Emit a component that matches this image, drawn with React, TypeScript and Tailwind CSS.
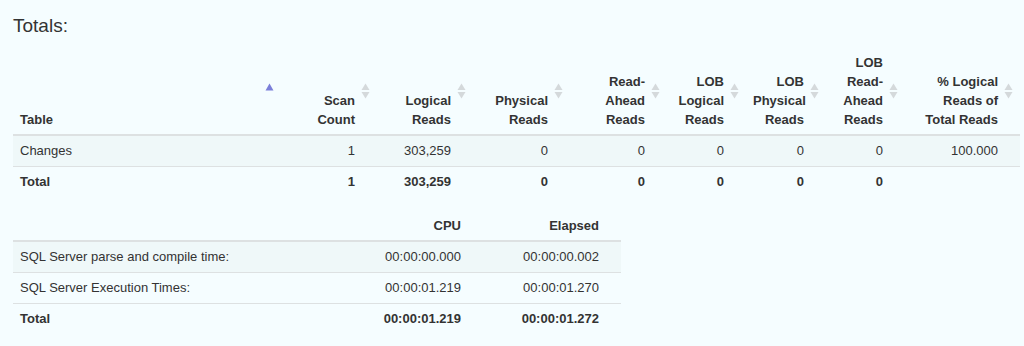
import React from 'react';

type Col = { key: string; label: string[]; width: number; sort?: 'asc' | 'none' };

const ioCols: Col[] = [
  { key: 'table', label: ['Table'], width: 268, sort: 'asc' },
  { key: 'scan', label: ['Scan', 'Count'], width: 96 },
  { key: 'logical', label: ['Logical', 'Reads'], width: 96 },
  { key: 'physical', label: ['Physical', 'Reads'], width: 97 },
  { key: 'readahead', label: ['Read-', 'Ahead', 'Reads'], width: 97 },
  { key: 'lobLogical', label: ['LOB', 'Logical', 'Reads'], width: 79 },
  { key: 'lobPhysical', label: ['LOB', 'Physical', 'Reads'], width: 80 },
  { key: 'lobReadahead', label: ['LOB', 'Read-', 'Ahead', 'Reads'], width: 79 },
  { key: 'percent', label: ['% Logical', 'Reads of', 'Total Reads'], width: 115 },
];

const ioRows = [
  ['Changes', '1', '303,259', '0', '0', '0', '0', '0', '100.000'],
];
const ioTotal = ['Total', '1', '303,259', '0', '0', '0', '0', '0', ''];

const timeRows = [
  ['SQL Server parse and compile time:', '00:00:00.000', '00:00:00.002'],
  ['SQL Server Execution Times:', '00:00:01.219', '00:00:01.270'],
];
const timeTotal = ['Total', '00:00:01.219', '00:00:01.272'];

function SortIcon({ sorted }: { sorted: boolean }) {
  return (
    <svg
      width="9"
      height="17"
      viewBox="0 0 9 17"
      className="absolute right-[7px] top-1/2 -translate-y-1/2"
    >
      {sorted ? (
        <path d="M4.5 1 L8.5 8 L0.5 8 Z" fill="#7b7fd9" />
      ) : (
        <>
          <path d="M4.5 1 L8.5 7.5 L0.5 7.5 Z" fill="#d4d9db" />
          <path d="M4.5 16 L8.5 9.5 L0.5 9.5 Z" fill="#d4d9db" />
        </>
      )}
    </svg>
  );
}

const cell = 'border-t border-[#dde1e2] py-[5px] pl-[7px] pr-[22px] leading-[20px] whitespace-nowrap ';

export default function App() {
  return (
    <div
      className="min-h-[346px] w-[1024px] bg-[#f5fdff] text-[#333] px-[13px]"
      style={{ fontFamily: '"Liberation Sans", Arial, sans-serif' }}
    >
      <h3 className="pt-[15px] text-[19px] leading-[22px] font-normal">Totals:</h3>

      <table className="mt-[11px] table-fixed border-collapse text-[13px] leading-[19px] w-[998px]">
        <colgroup>
          {ioCols.map((c) => (
            <col key={c.key} style={{ width: c.width }} />
          ))}
        </colgroup>
        <thead>
          <tr>
            {ioCols.map((c, i) => (
              <th
                key={c.key}
                className={
                  'relative align-bottom font-bold border-b-2 border-[#dde1e2] py-[5px] pl-[7px] pr-[22px] ' +
                  (i === 0 ? 'text-left' : 'text-right')
                }
              >
                {c.label.map((l) => (
                  <div key={l} className="whitespace-nowrap">{l}</div>
                ))}
                <SortIcon sorted={c.sort === 'asc'} />
              </th>
            ))}
          </tr>
        </thead>
        <tbody>
          {ioRows.map((r) => (
            <tr key={r[0]} className="bg-[#eff8f9]">
              {r.map((v, i) => (
                <td key={i} className={cell + (i === 0 ? 'text-left' : 'text-right')}>
                  {v}
                </td>
              ))}
            </tr>
          ))}
          <tr>
            {ioTotal.map((v, i) => (
              <td key={i} className={cell + 'font-bold ' + (i === 0 ? 'text-left' : 'text-right')}>
                {v}
              </td>
            ))}
          </tr>
        </tbody>
      </table>

      <table className="mt-[14px] table-fixed border-collapse text-[13px] leading-[19px] w-[608px]">
        <colgroup>
          <col style={{ width: 340 }} />
          <col style={{ width: 130 }} />
          <col style={{ width: 138 }} />
        </colgroup>
        <thead>
          <tr>
            <th className="border-b-2 border-[#dde1e2] py-[5px] pl-[7px] pr-[22px] text-left"></th>
            <th className="border-b-2 border-[#dde1e2] py-[5px] pl-[7px] pr-[22px] text-right font-bold">CPU</th>
            <th className="border-b-2 border-[#dde1e2] py-[5px] pl-[7px] pr-[22px] text-right font-bold">Elapsed</th>
          </tr>
        </thead>
        <tbody>
          {timeRows.map((r, ri) => (
            <tr key={r[0]} className={ri % 2 === 0 ? 'bg-[#eff8f9]' : ''}>
              {r.map((v, i) => (
                <td key={i} className={cell + (i === 0 ? 'text-left' : 'text-right')}>
                  {v}
                </td>
              ))}
            </tr>
          ))}
          <tr>
            {timeTotal.map((v, i) => (
              <td key={i} className={cell + 'font-bold ' + (i === 0 ? 'text-left' : 'text-right')}>
                {v}
              </td>
            ))}
          </tr>
        </tbody>
      </table>
    </div>
  );
}
